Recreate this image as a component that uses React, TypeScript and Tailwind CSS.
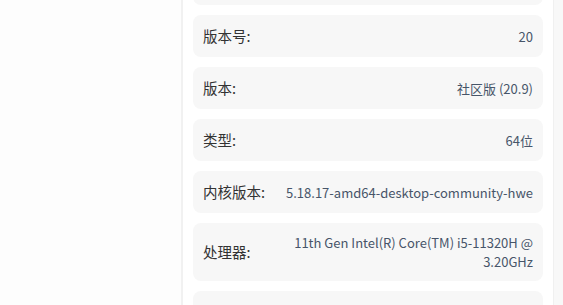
const rows: [string, string][] = [
  ['', ''],
  ['版本号:', '20'],
  ['版本:', '社区版 (20.9)'],
  ['类型:', '64位'],
  ['内核版本:', '5.18.17-amd64-desktop-community-hwe'],
  ['处理器:', '11th Gen Intel(R) Core(TM) i5-11320H @ 3.20GHz'],
  ['', ''],
]

export default function App() {
  return (
    <div
      className="flex h-[305px] w-[563px] overflow-hidden bg-white"
      style={{ fontFamily: '"Noto Sans CJK SC", "Noto Sans", sans-serif' }}
    >
      <div className="w-[183px] shrink-0 border-r-2 border-[#f1f1f1] bg-[#fdfdfd]" />
      <div className="flex-1 overflow-hidden px-[10px]">
        {/* list is scrolled: first card mostly above the top edge */}
        <div className="-mt-[37px] flex flex-col gap-[10px]">
          {rows.map(([label, value], i) => (
            <div
              key={i}
              className="flex items-center justify-between gap-4 rounded-[8px] bg-[#f7f7f7] px-[10px] py-[10px] min-h-[42px]"
            >
              <span className="shrink-0 text-[14.5px] leading-[22px] text-[#333333]">{label}</span>
              <span className="max-w-[250px] text-right text-[13px] leading-[19px] text-[#475569]">
                {value}
              </span>
            </div>
          ))}
        </div>
      </div>
      <div className="w-[10px] shrink-0 border-l border-[#f0f0f0] bg-[#f8f8f8]" />
    </div>
  )
}
